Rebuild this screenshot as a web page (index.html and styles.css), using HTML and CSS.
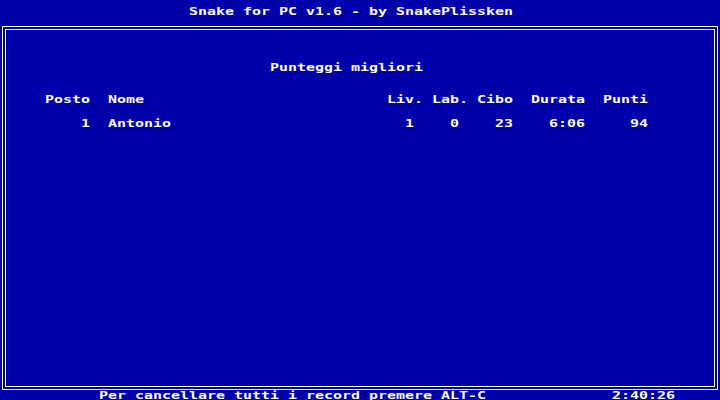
FILE: index.html
```html
<!DOCTYPE html>
<html lang="it">
<head>
<meta charset="utf-8">
<title>Snake for PC v1.6</title>
<link rel="stylesheet" href="styles.css">
</head>
<body>
<div class="screen">
  <div class="title"><span class="t">Snake for PC v1.6 - by SnakePlissken</span></div>
  <div class="frame">
    <div class="frame-inner">
      <div class="heading"><span class="t">Punteggi migliori</span></div>
      <div class="row head"><span class="t">Posto  Nome                           Liv. Lab. Cibo  Durata  Punti</span></div>
      <div class="row data"><span class="t">    1  Antonio                          1    0    23    6:06     94</span></div>
    </div>
  </div>
  <div class="footer"><span class="t">Per cancellare tutti i record premere ALT-C              2:40:26</span></div>
</div>
</body>
</html>
```
FILE: styles.css
```css
html, body {
  margin: 0;
  padding: 0;
  background: #0000aa;
}
.screen {
  width: 720px;
  height: 400px;
  display: flex;
  flex-direction: column;
  background: #0000aa;
  color: #ffffff;
  font-family: "DejaVu Sans Mono", "Liberation Mono", monospace;
  font-weight: bold;
  font-size: 10px;
  line-height: 8px;
  overflow: hidden;
}
.t {
  display: inline-block;
  white-space: pre;
  transform: scaleX(1.4949);
  transform-origin: left top;
}
.title {
  height: 8px;
  margin-top: 8px;
  padding-left: 189px;
}
.frame {
  flex: 1;
  margin: 10px 2px 0 2px;
  border: 1px solid #ffffff;
  display: flex;
}
.frame-inner {
  flex: 1;
  margin: 2px;
  border: 1px solid #ffffff;
  padding: 34px 0 0 39px;
}
.heading {
  height: 8px;
  padding-left: 225px;
}
.row {
  height: 8px;
}
.head {
  margin-top: 24px;
}
.data {
  margin-top: 16px;
}
.footer {
  height: 8px;
  margin-top: 2px;
  padding-left: 99px;
}
```
